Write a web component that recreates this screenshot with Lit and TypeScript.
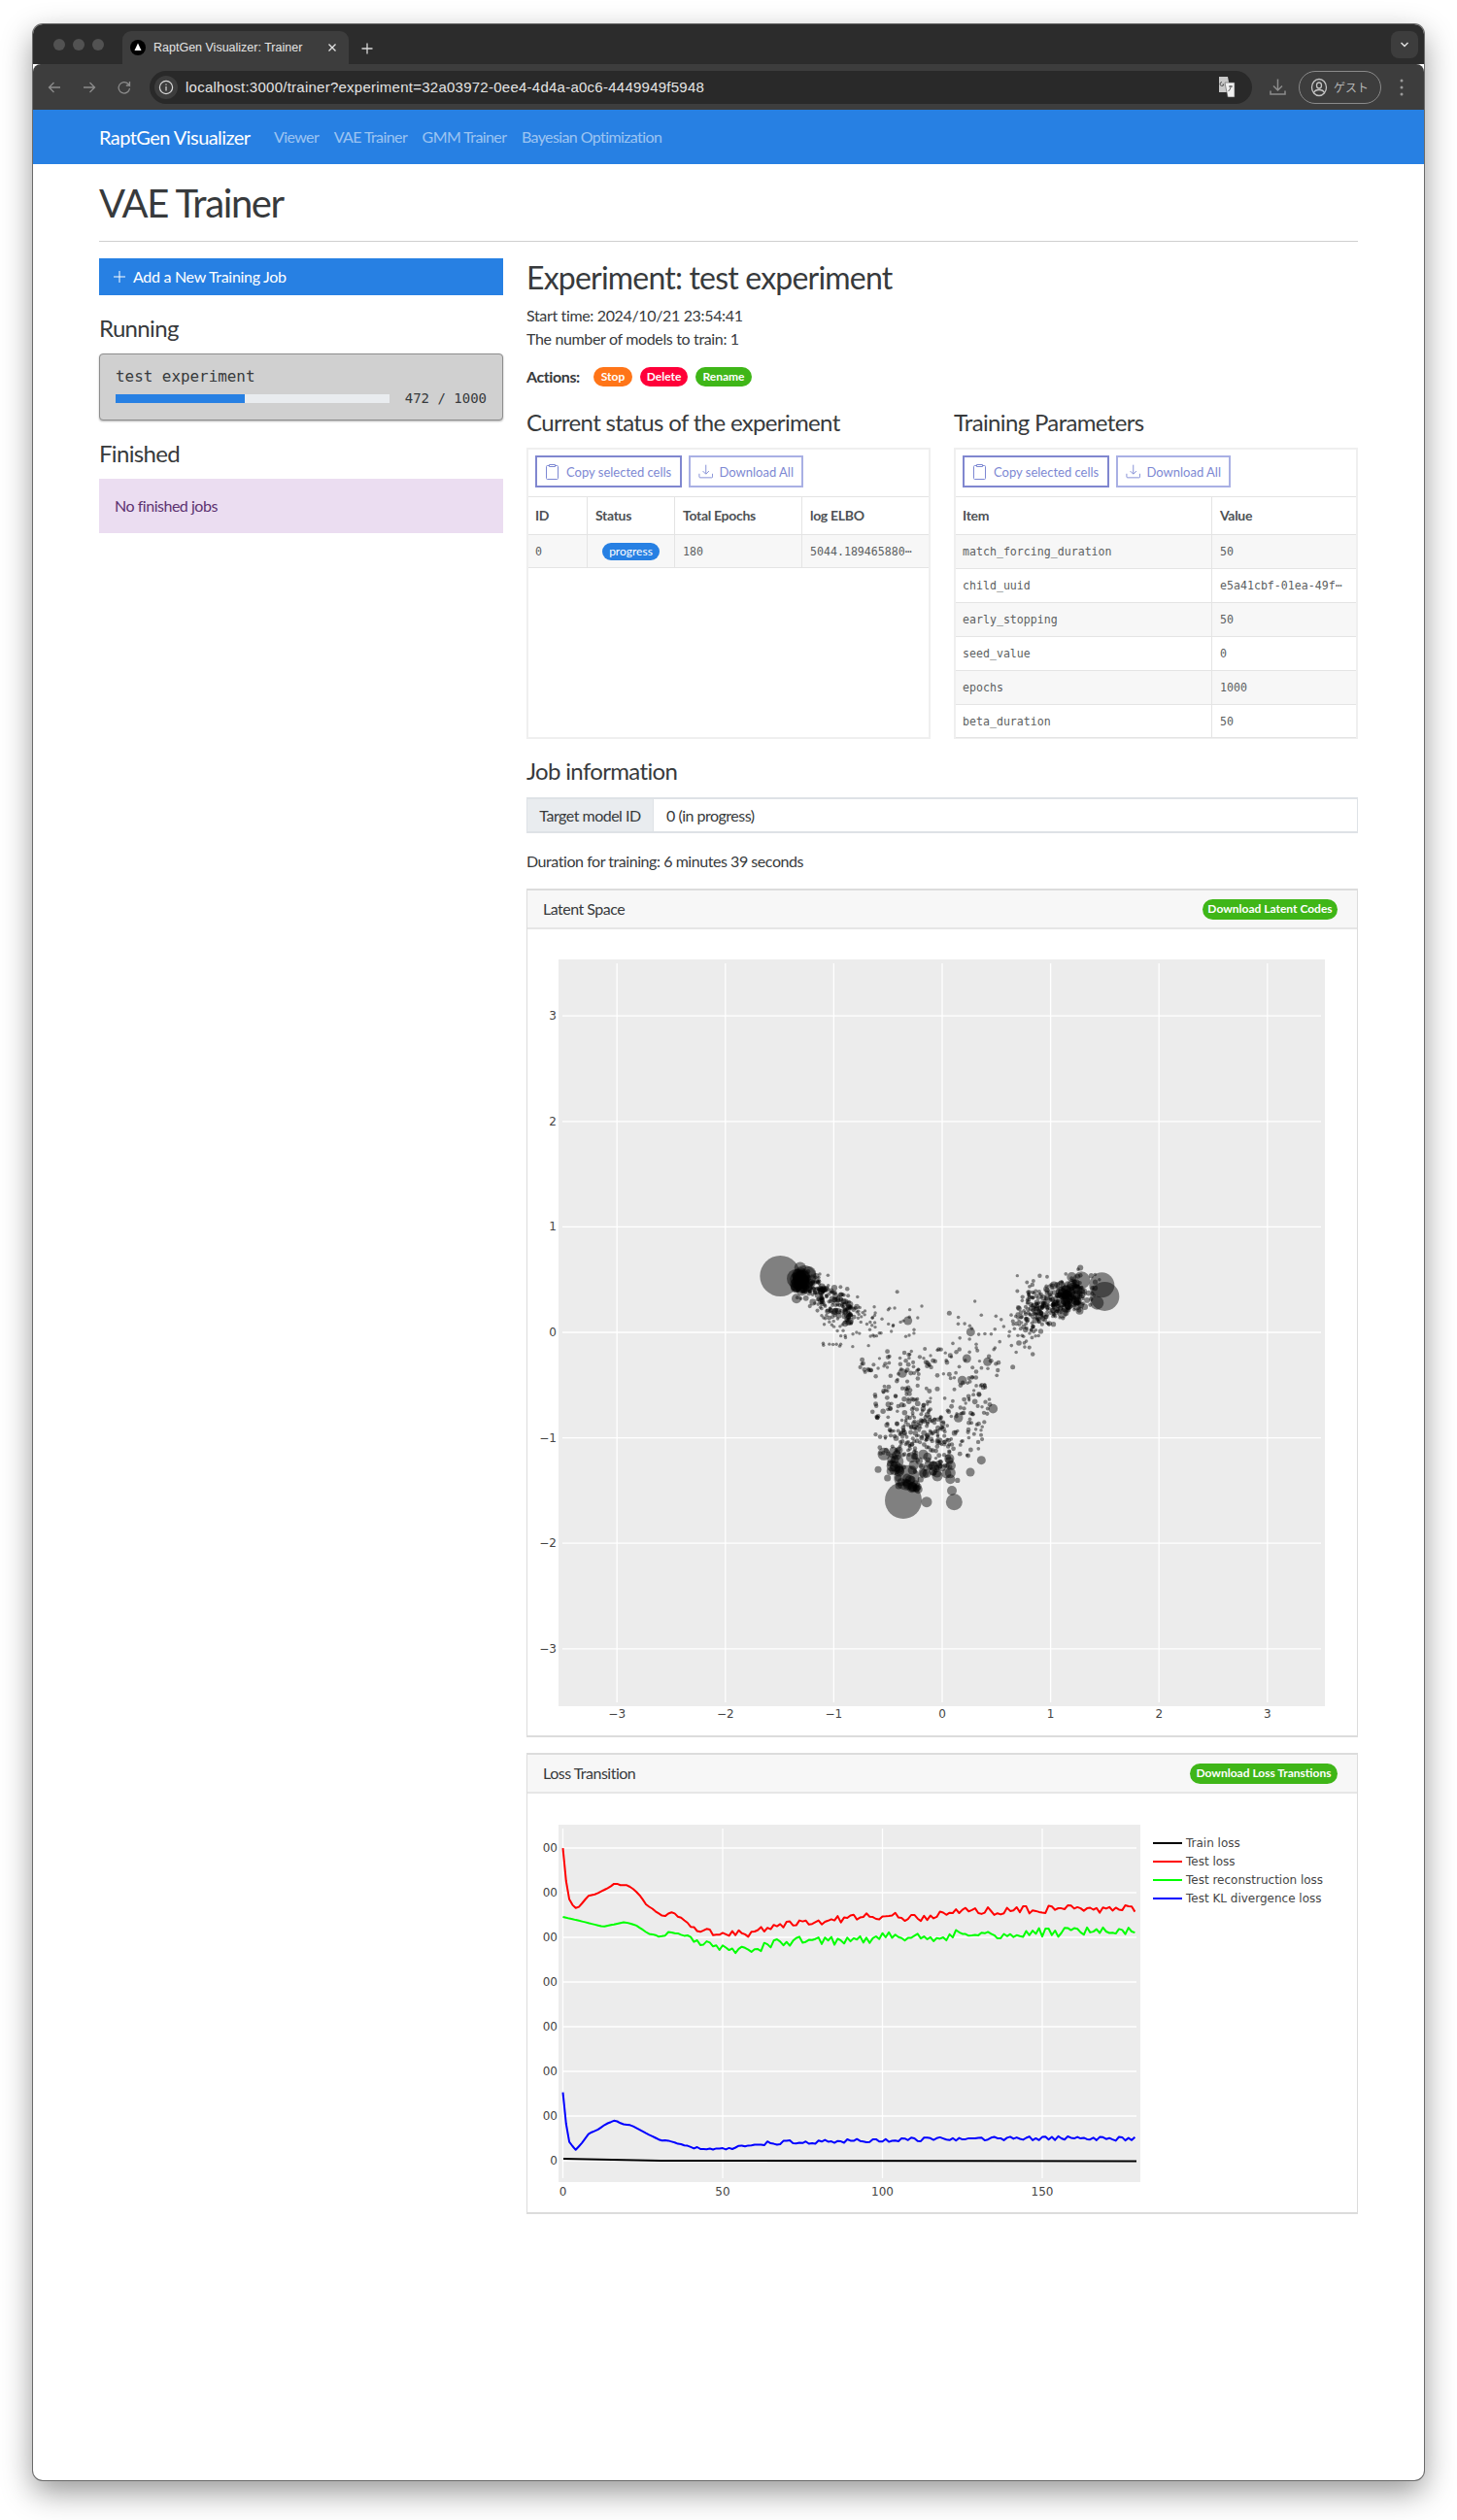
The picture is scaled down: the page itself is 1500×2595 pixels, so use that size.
import { css, html, LitElement, svg } from 'lit'
import { customElement } from 'lit/decorators.js'

/** Small seeded generator so the scatter looks the same on every load */
function seeded(seed: number) {
  let a = seed
  return () => {
    a = (a + 0x6d2b79f5) | 0
    let t = Math.imul(a ^ (a >>> 15), 1 | a)
    t = (t + Math.imul(t ^ (t >>> 7), 61 | t)) ^ t
    return ((t ^ (t >>> 14)) >>> 0) / 4294967296
  }
}

type Dot = [number, number, number]

function latentDots(): Dot[] {
  const rnd = seeded(1234)
  const gauss = () => (rnd() + rnd() + rnd() + rnd() - 2) * 1.73
  const dots: Dot[] = []
  // all positions below are picked from the reference crop at 3x, offset by 740,1260
  const add = (u: number, v: number, r: number) => dots.push([740 + u / 3, 1260 + v / 3, r])
  const size = (lo: number, hi: number) => lo + rnd() * rnd() * (hi - lo)

  for (let i = 0; i < 210; i++) {
    const t = rnd() ** 1.1
    const w = gauss() * 22
    add(255 + t * 165 + w * 0.6, 175 + t * 115 - w * 0.8, size(1.7, 4))
  }
  for (let i = 0; i < 30; i++) add(252 + gauss() * 13, 172 + gauss() * 13, 4 + rnd() * 4)
  for (let i = 0; i < 45; i++) add(310 + rnd() * 180, 250 + rnd() * 130, 1.7)
  for (let i = 0; i < 240; i++) {
    const a = gauss()
    add(1035 + a * 58, 245 - a * 28 + gauss() * 30, size(1.7, 3.4))
  }
  for (let i = 0; i < 50; i++) add(1085 + gauss() * 30, 230 + gauss() * 24, 2.5 + rnd() * 3)
  for (let i = 0; i < 60; i++) add(965 + gauss() * 24, 270 + gauss() * 50, 1.7 + rnd() * 0.6)
  for (let i = 0; i < 300; i++) {
    const v = 385 + rnd() * 335
    const half = 255 - (v - 385) * 0.25
    add(650 + (rnd() - 0.5) * half * 1.8, v, 1.6 + rnd() * 0.9)
  }
  for (let i = 0; i < 95; i++) add(625 + gauss() * 62, 630 + gauss() * 50, 1.7 + rnd() * 1.2)
  for (let i = 0; i < 42; i++) add(668 + gauss() * 30, 745 + gauss() * 20, 2.2 + rnd() * 3)
  for (let i = 0; i < 16; i++) add(596 + gauss() * 20, 808 + gauss() * 8, 3.5 + rnd() * 2.5)
  for (let i = 0; i < 12; i++) add(555 + gauss() * 10, 738 + gauss() * 20, 3 + rnd() * 3)
  for (let i = 0; i < 30; i++) add(430 + rnd() * 200, 255 + rnd() * 95, 1.7)
  for (let i = 0; i < 34; i++) add(720 + rnd() * 230, 280 + rnd() * 120, 1.8)

  const big: Dot[] = [
    [190, 162, 21], [265, 165, 12], [240, 170, 10], [240, 232, 5],
    [1183, 190, 13], [1192, 225, 15], [1120, 175, 9], [1090, 165, 5], [1168, 245, 7],
    [570, 855, 19], [727, 860, 8.5], [642, 860, 5.5], [510, 712, 6.5], [811, 731, 4.5],
    [777, 768, 4.5], [580, 785, 13], [595, 722, 5.5], [720, 825, 5], [492, 760, 3.5],
    [530, 765, 4], [521, 786, 3.5], [550, 735, 7], [557, 765, 5.5], [715, 770, 5.5],
    [715, 790, 5], [675, 780, 5.5], [597, 815, 5.5], [584, 300, 4.5], [778, 335, 4.5],
    [712, 277, 2.5], [766, 417, 4.5], [830, 427, 4.5], [752, 485, 4.8], [567, 462, 4.8],
    [847, 572, 4.8], [740, 600, 4.8], [927, 369, 2.8], [908, 443, 2.5], [680, 673, 4],
    [791, 550, 2.8], [551, 211, 2], [627, 255, 1.7], [791, 240, 1.7], [922, 161, 1.7],
  ]
  big.forEach(([u, v, r]) => add(u, v, r))
  return dots
}

type Key = [number, number]

function lossLine(keys: Key[], vBase: number, noise: number, seed: number): string {
  const rnd = seeded(seed)
  const pts: string[] = []
  const abs = keys.map(([u, v]): Key => [530 + u / 1.762, vBase + v / 3])
  for (let e = 0; e < 180; e++) {
    const x = 579.5 + e * 3.29
    let k = 0
    while (k < abs.length - 2 && abs[k + 1][0] < x) k++
    const [x0, y0] = abs[k]
    const [x1, y1] = abs[k + 1]
    const ramp = Math.min(1, Math.max(0, (e - 25) / 30))
    const y = y0 + ((y1 - y0) * (x - x0)) / (x1 - x0) + (rnd() - 0.5) * noise * ramp
    pts.push(`${x.toFixed(1)},${y.toFixed(1)}`)
  }
  return pts.join(' ')
}

const redLine = lossLine(
  [[87, 365], [92, 460], [98, 525], [108, 555], [115, 553], [122, 540], [133, 517], [148, 511], [160, 500], [172, 490], [182, 477], [192, 484], [205, 484], [218, 500], [228, 518], [238, 543], [252, 560], [267, 580], [273, 578], [280, 566], [295, 578], [312, 597], [325, 618], [340, 625], [355, 628], [365, 637], [385, 635], [400, 635], [422, 632], [450, 623], [465, 613], [490, 605], [510, 605], [530, 595], [570, 595], [590, 590], [640, 580], [680, 577], [720, 585], [760, 580], [800, 565], [850, 562], [880, 570], [910, 560], [1000, 557], [1128, 558]],
  1780, 8, 11,
)
const greenLine = lossLine(
  [[87, 582], [120, 595], [160, 612], [200, 598], [220, 608], [243, 634], [270, 645], [280, 630], [315, 645], [325, 660], [350, 667], [365, 675], [400, 682], [425, 685], [465, 668], [490, 660], [530, 657], [570, 655], [640, 648], [680, 643], [740, 650], [800, 635], [850, 632], [880, 642], [910, 632], [1000, 628], [1128, 630]],
  1780, 10, 22,
)
const blueLine = lossLine(
  [[87, 280], [92, 370], [98, 435], [110, 462], [122, 440], [135, 410], [150, 400], [165, 382], [182, 370], [195, 382], [210, 385], [225, 398], [240, 412], [265, 432], [280, 432], [300, 445], [325, 455], [360, 457], [385, 462], [410, 450], [430, 443], [500, 438], [600, 435], [640, 432], [700, 431], [760, 427], [850, 427], [1000, 425], [1128, 428]],
  2060, 4, 33,
)

const clipboardIcon = html`<svg width="16" height="18" viewBox="0 0 16 18" fill="none" stroke="currentColor" stroke-width="1">
  <path d="M4.500 2.500H2.500a1 1 0 0 0-1 1v12a1 1 0 0 0 1 1h10a1 1 0 0 0 1-1v-12a1 1 0 0 0-1-1H10.500" />
  <path d="M4.500 1.500h6v2h-6z" />
</svg>`

const downloadIcon = html`<svg width="16" height="17" viewBox="0 0 17 17" fill="none" stroke="currentColor" stroke-width="1">
  <path d="M8.500 1v10M5 8l3.500 3.500L12 8" />
  <path d="M1 11v3.500a1 1 0 0 0 1 1h13a1 1 0 0 0 1-1V11" />
</svg>`

@customElement('app-root')
export class AppRoot extends LitElement {
  static styles = css`
    :host {
      --sans: Lato, 'Noto Sans', sans-serif;
      --mono: 'DejaVu Sans Mono', monospace;
      display: block;
      width: 1500px;
      height: 2595px;
      padding: 25px 34px 0;
      box-sizing: border-box;
      background: #fff;
      font-family: var(--sans);
      font-size: 16px;
      line-height: 24px;
      color: #373a3c;
    }
    * {
      box-sizing: border-box;
    }
    .window {
      height: 2529px;
      border-radius: 10px;
      overflow: hidden;
      background: #fff;
      box-shadow: 0 0 0 1px #6a6a6a, 0 12px 32px rgb(0 0 0 / 0.42);
    }

    /* browser chrome */
    .tabstrip {
      display: flex;
      align-items: flex-end;
      height: 41px;
      padding-left: 21px;
      background: #2c2c2c;
    }
    .lights {
      display: flex;
      gap: 8px;
      width: 71px;
      padding-bottom: 14px;
    }
    .lights i {
      width: 12px;
      height: 12px;
      border-radius: 50%;
      background: #525252;
    }
    .tab {
      display: flex;
      align-items: center;
      width: 233px;
      height: 34px;
      padding: 0 12px 0 8px;
      border-radius: 9px 9px 0 0;
      background: #3d3d3d;
      font-family: 'Liberation Sans', sans-serif;
      font-size: 12.500px;
      color: #e4e4e4;
    }
    .tab span {
      flex: 1;
      margin-left: 8px;
    }
    .new-tab {
      margin: 0 0 8px 11px;
      height: 16px;
    }
    .tab-menu {
      display: flex;
      align-items: center;
      justify-content: center;
      width: 28px;
      height: 28px;
      margin: 0 6px 6px auto;
      border-radius: 8px;
      background: #3d3d3d;
    }
    .toolbar {
      display: flex;
      align-items: center;
      height: 47px;
      background: #3d3d3d;
      border-radius: 8px 8px 0 0;
    }
    .nav-icons {
      display: flex;
      align-items: center;
      gap: 20px;
      width: 120px;
      padding-left: 14px;
    }
    .omnibox {
      display: flex;
      align-items: center;
      width: 1135px;
      height: 34px;
      padding: 0 17px 0 5px;
      border-radius: 17px;
      background: #292929;
      font-family: 'Liberation Sans', sans-serif;
      font-size: 15px;
      letter-spacing: 0.25px;
      color: #e4e4e4;
    }
    .omnibox .info {
      display: flex;
      align-items: center;
      justify-content: center;
      width: 24px;
      height: 24px;
      margin-right: 8px;
      border-radius: 50%;
      background: #3d3d3d;
    }
    .omnibox .url {
      flex: 1;
    }
    .download-icon {
      margin-left: 18px;
    }
    .guest {
      display: flex;
      align-items: center;
      gap: 6px;
      width: 85px;
      height: 34px;
      margin-left: 13px;
      padding-left: 11px;
      border: 1px solid #8a8a8a;
      border-radius: 17px;
      font-family: 'Noto Sans CJK JP', sans-serif;
      font-size: 12px;
      color: #b4b4b4;
    }
    .kebab {
      margin-left: 19px;
    }

    /* site */
    .navbar {
      display: flex;
      align-items: center;
      height: 56px;
      padding-left: 68px;
      background: #2780e3;
      color: rgb(255 255 255 / 0.55);
      white-space: nowrap;
    }
    .brand {
      width: 180px;
      font-size: 20px;
      color: #fff;
      letter-spacing: -0.55px;
    }
    .navbar a {
      margin-right: 15.500px;
      letter-spacing: -0.6px;
    }
    main {
      padding: 0 68px;
    }
    h1 {
      margin: 0;
      height: 80px;
      padding-top: 15px;
      border-bottom: 1px solid #cfcfcf;
      font-size: 40px;
      line-height: 50px;
      font-weight: 400;
      letter-spacing: -1.4px;
    }
    .columns {
      display: grid;
      grid-template-columns: 416px 856px;
      gap: 24px;
      margin-top: 17px;
    }
    h2,
    h3 {
      margin: 0;
      font-weight: 400;
    }
    h2 {
      height: 42px;
      font-size: 32px;
      line-height: 40px;
      letter-spacing: -0.8px;
    }
    h3 {
      height: 30px;
      font-size: 24px;
      line-height: 28px;
      letter-spacing: -0.66px;
    }
    .add-job {
      display: flex;
      align-items: center;
      gap: 7px;
      height: 38px;
      padding-left: 14px;
      background: #2780e3;
      color: #fff;
      letter-spacing: -0.3px;
    }
    .side-title {
      margin: 20px 0 10px;
    }
    .job {
      height: 69px;
      padding: 11px 16px 0;
      border: 1px solid #8d8d8d;
      border-radius: 4px;
      background: #d0d0d0;
      box-shadow: 0 1px 2px rgb(0 0 0 / 0.3);
      font-family: var(--mono);
      font-size: 15.900px;
    }
    .job-progress {
      display: flex;
      align-items: center;
      gap: 16px;
      height: 20px;
      font-size: 14px;
    }
    .bar {
      flex: 1;
      height: 9px;
      background: #e9ecef;
    }
    .bar div {
      width: 47.2%;
      height: 100%;
      background: #2780e3;
    }
    .alert {
      height: 56px;
      padding: 16px;
      background: #ebddf1;
      color: #5c3270;
      letter-spacing: -0.48px;
    }
    .meta {
      margin: 5px 0 0;
      letter-spacing: -0.35px;
    }
    .actions {
      display: flex;
      align-items: center;
      gap: 8px;
      height: 20px;
      margin-top: 17px;
    }
    .actions b {
      width: 61px;
      letter-spacing: -0.4px;
    }
    .badge {
      display: inline-flex;
      align-items: center;
      justify-content: center;
      border-radius: 11px;
      font-size: 12px;
      font-weight: 700;
      line-height: 1;
      color: #fff;
    }
    .actions .badge {
      height: 20px;
    }
    .stop {
      width: 40px;
      background: #ff7518;
    }
    .delete {
      width: 49px;
      background: #ff0039;
    }
    .rename {
      width: 58px;
      background: #3fb618;
    }
    .grids {
      display: grid;
      grid-template-columns: 416px 416px;
      gap: 24px;
      margin-top: 23px;
    }
    .grid-box {
      height: 300px;
      margin-top: 10px;
      border: 2px solid #efefef;
      font-size: 14px;
    }
    .grid-tools {
      display: flex;
      gap: 7px;
      height: 48px;
      padding: 6px 7px;
    }
    .grid-tools button {
      display: flex;
      align-items: center;
      gap: 6px;
      height: 33px;
      padding: 0 8px;
      border: 2px solid #a9b0e4;
      background: #fff;
      font: inherit;
      font-size: 13px;
      white-space: nowrap;
      color: #7d88d3;
    }
    .grid-tools button:first-child {
      width: 151px;
      border-color: #8087cf;
    }
    .grid-tools button:last-child {
      width: 118px;
    }
    .row {
      display: grid;
      height: 35px;
      border-top: 1px solid #e4e4e4;
      font-family: var(--mono);
      font-size: 11.600px;
      color: #5c5f61;
    }
    .row.head {
      height: 39px;
      font-family: var(--sans);
      font-size: 14px;
      font-weight: 700;
      letter-spacing: -0.3px;
      color: #4e5255;
    }
    .row.odd {
      background: #f7f7f7;
    }
    .row.last {
      border-bottom: 1px solid #e4e4e4;
    }
    .status-cols {
      grid-template-columns: 60px 90px 131px 1fr;
    }
    .param-cols {
      grid-template-columns: 263px 1fr;
    }
    .cell {
      display: flex;
      align-items: center;
      padding: 0 8px;
      border-left: 1px solid #e4e4e4;
      overflow: hidden;
      white-space: nowrap;
    }
    .cell:first-child {
      border-left: 0;
      padding-left: 7px;
    }
    .cell.center {
      justify-content: center;
    }
    .progress-pill {
      width: 59px;
      height: 18px;
      flex: none;
      background: #2780e3;
      font-family: var(--sans);
      font-weight: 400;
    }
    .job-title {
      margin-top: 19px;
    }
    .input-group {
      display: flex;
      height: 37px;
      margin-top: 11px;
      border: 1px solid #dee2e6;
      border-width: 2px 1px;
      letter-spacing: -0.5px;
    }
    .input-group label {
      display: flex;
      align-items: center;
      justify-content: center;
      width: 130px;
      background: #e9ecef;
      border-right: 1px solid #dee2e6;
    }
    .input-group div {
      display: flex;
      align-items: center;
      padding-left: 13px;
    }
    .duration {
      margin: 17px 0 16px;
      letter-spacing: -0.45px;
    }
    .card {
      border: 1px solid #dcdcdc;
      border-top-width: 2px;
      border-bottom-width: 2px;
    }
    .card + .card {
      margin-top: 16px;
    }
    .card-head {
      display: flex;
      align-items: center;
      justify-content: space-between;
      height: 40px;
      padding: 0 20px 0 16px;
      background: #f7f7f7;
      border-bottom: 2px solid #e6e6e6;
      letter-spacing: -0.5px;
    }
    .card-head .badge {
      height: 21px;
      letter-spacing: 0;
      background: #3fb618;
    }
    .latent-btn {
      width: 139px;
    }
    .loss-btn {
      width: 152px;
    }
    .card svg {
      display: block;
    }
    .latent-card {
      height: 874px;
    }
    .loss-card {
      height: 475px;
    }
    .plot-bg {
      fill: #ececec;
    }
    .grid-line {
      stroke: #fff;
      stroke-width: 1.300;
    }
    .tick {
      font-family: 'DejaVu Sans', sans-serif;
      font-size: 12px;
      fill: #444;
    }
    .trace {
      fill: none;
      stroke-width: 2;
      stroke-linejoin: round;
    }
  `

  private latent = latentDots()

  private renderGrid(title: string, cols: string, heads: string[], rows: string[][]) {
    return html`<section>
      <h3>${title}</h3>
      <div class="grid-box">
        <div class="grid-tools">
          <button>${clipboardIcon}Copy selected cells</button>
          <button>${downloadIcon}Download All</button>
        </div>
        <div class="row head ${cols}">${heads.map((h) => html`<div class="cell">${h}</div>`)}</div>
        ${rows.map(
          (r, i) => html`<div class="row ${cols} ${i % 2 ? '' : 'odd'} ${i === rows.length - 1 ? 'last' : ''}">
            ${r.map((c) =>
              c === 'progress'
                ? html`<div class="cell center"><span class="badge progress-pill">progress</span></div>`
                : html`<div class="cell">${c}</div>`,
            )}
          </div>`,
        )}
      </div>
    </section>`
  }

  private renderLatent() {
    const xs = [-3, -2, -1, 0, 1, 2, 3]
    return html`<svg width="854" height="830" viewBox="543 957 854 830">
      <rect class="plot-bg" x="575" y="988" width="789" height="769"></rect>
      ${xs.map((v) => {
        const x = 970 + v * 111.6
        const y = 1372 - v * 108.6
        return svg`
          <line class="grid-line" x1=${x} x2=${x} y1="992" y2="1753"></line>
          <line class="grid-line" x1="579" x2="1360" y1=${y} y2=${y}></line>
          <text class="tick" x=${x} y="1769" text-anchor="middle">${v < 0 ? `\u2212${-v}` : v}</text>
          <text class="tick" x="573" y=${y + 4} text-anchor="end">${v < 0 ? `\u2212${-v}` : v}</text>`
      })}
      ${this.latent.map(([x, y, r]) => svg`<circle cx=${x} cy=${y} r=${r} fill="#000" fill-opacity="0.46"></circle>`)}
    </svg>`
  }

  private renderLoss() {
    const xs = [0, 50, 100, 150]
    const ys = [1903, 1949, 1995, 2041, 2087, 2133, 2179]
    const legend: [string, string][] = [
      ['Train loss', '#000'],
      ['Test loss', '#f00'],
      ['Test reconstruction loss', '#0f0'],
      ['Test KL divergence loss', '#00f'],
    ]
    return html`<svg width="854" height="431" viewBox="543 1847 854 431">
      <rect class="plot-bg" x="575" y="1879" width="599" height="368"></rect>
      ${xs.map((v) => {
        const x = 579.5 + v * 3.29
        return svg`
          <line class="grid-line" x1=${x} x2=${x} y1="1883" y2="2243"></line>
          <text class="tick" x=${x} y="2261" text-anchor="middle">${v}</text>`
      })}
      ${ys.map(
        (y) => svg`
          <line class="grid-line" x1="580" x2="1170" y1=${y} y2=${y}></line>
          <text class="tick" x="574" y=${y + 4} text-anchor="end">00</text>`,
      )}
      <line class="grid-line" x1="580" x2="1170" y1="2225" y2="2225"></line>
      <text class="tick" x="574" y="2229" text-anchor="end">0</text>
      <polyline class="trace" stroke="#000" points="580,2223 680,2225 1170,2225.5"></polyline>
      <polyline class="trace" stroke="#f00" points=${redLine}></polyline>
      <polyline class="trace" stroke="#0f0" points=${greenLine}></polyline>
      <polyline class="trace" stroke="#00f" points=${blueLine}></polyline>
      ${legend.map(([name, color], i) => {
        const y = 1898 + i * 19
        return svg`
          <line x1="1187" x2="1217" y1=${y} y2=${y} stroke=${color} stroke-width="2"></line>
          <text class="tick" x="1221" y=${y + 4}>${name}</text>`
      })}
    </svg>`
  }

  render() {
    return html`<div class="window">
      <div class="tabstrip">
        <div class="lights"><i></i><i></i><i></i></div>
        <div class="tab">
          <svg width="16" height="16" viewBox="0 0 16 16">
            <circle cx="8" cy="8" r="8" fill="#000"></circle>
            <path d="M8 3.500l3.500 7.500h-7z" fill="#fff"></path>
          </svg>
          <span>RaptGen Visualizer: Trainer</span>
          <svg width="10" height="10" viewBox="0 0 10 10" stroke="#e4e4e4" stroke-width="1.300">
            <path d="M1.500 1.500l7 7M8.500 1.500l-7 7"></path>
          </svg>
        </div>
        <svg class="new-tab" width="16" height="16" viewBox="0 0 16 16" stroke="#d8d8d8" stroke-width="1.300">
          <path d="M8 2.500v11M2.500 8h11"></path>
        </svg>
        <div class="tab-menu">
          <svg width="10" height="8" viewBox="0 0 10 8" fill="none" stroke="#e4e4e4" stroke-width="1.400">
            <path d="M1.500 2l3.500 3.500L8.500 2"></path>
          </svg>
        </div>
      </div>
      <div class="toolbar">
        <div class="nav-icons">
          <svg width="16" height="16" viewBox="0 0 16 16" fill="none" stroke="#8c8c8c" stroke-width="1.300">
            <path d="M14 8H2.500M7.500 3L2.500 8l5 5"></path>
          </svg>
          <svg width="16" height="16" viewBox="0 0 16 16" fill="none" stroke="#8c8c8c" stroke-width="1.300">
            <path d="M2 8h11.500M8.500 3l5 5-5 5"></path>
          </svg>
          <svg width="16" height="16" viewBox="0 0 16 16" fill="none" stroke="#8c8c8c" stroke-width="1.300">
            <path d="M13.500 9a5.700 5.700 0 1 1-1.600-4.700L13.500 6V2M13.500 6H9.800"></path>
          </svg>
        </div>
        <div class="omnibox">
          <span class="info">
            <svg width="16" height="16" viewBox="0 0 16 16" fill="none" stroke="#d8d8d8" stroke-width="1.200">
              <circle cx="8" cy="8" r="6.600"></circle>
              <path d="M8 7v4.500M8 4.400v1.300"></path>
            </svg>
          </span>
          <span class="url">localhost:3000/trainer?experiment=32a03972-0ee4-4d4a-a0c6-4449949f5948</span>
          <svg width="17" height="23" viewBox="0 0 17 23">
            <path d="M0 1h9l3 16H0z" fill="#c8c8c8"></path>
            <path d="M6 7h10v15H9z" fill="#f0f0f0" stroke="#555" stroke-width="0.600"></path>
            <path d="M3 6.500a2 2 0 1 0 2 2.500H3.600M10 11h4M12 10v1c0 2.500-1.500 4-2.500 5" fill="none" stroke="#444" stroke-width="0.900"></path>
          </svg>
        </div>
        <svg class="download-icon" width="17" height="17" viewBox="0 0 17 17" fill="none" stroke="#8c8c8c" stroke-width="1.500">
          <path d="M8.500 0.500v11M4 7.500l4.500 4.500L13 7.500M1 12.500v3.500h15v-3.500"></path>
        </svg>
        <div class="guest">
          <svg width="18" height="20" viewBox="0 0 18 20" fill="none" stroke="#c4c4c4" stroke-width="1.300">
            <ellipse cx="9" cy="10" rx="7.500" ry="8.500"></ellipse>
            <ellipse cx="9" cy="8" rx="2.500" ry="3"></ellipse>
            <path d="M3.500 15.500c1-2.500 3-3 5.500-3s4.500.5 5.500 3"></path>
          </svg>
          ゲスト
        </div>
        <svg class="kebab" width="4" height="20" viewBox="0 0 4 20" fill="#9a9a9a">
          <circle cx="2" cy="3" r="1.500"></circle>
          <circle cx="2" cy="10" r="1.500"></circle>
          <circle cx="2" cy="17" r="1.500"></circle>
        </svg>
      </div>

      <nav class="navbar">
        <span class="brand">RaptGen Visualizer</span>
        <a>Viewer</a><a>VAE Trainer</a><a>GMM Trainer</a><a>Bayesian Optimization</a>
      </nav>

      <main>
        <h1>VAE Trainer</h1>
        <div class="columns">
          <aside>
            <div class="add-job">
              <svg width="14" height="14" viewBox="0 0 14 14" stroke="#fff" stroke-width="1">
                <path d="M7 1v12M1 7h12"></path>
              </svg>
              Add a New Training Job
            </div>
            <h3 class="side-title">Running</h3>
            <div class="job">
              <div>test experiment</div>
              <div class="job-progress">
                <div class="bar"><div></div></div>
                <span>472 / 1000</span>
              </div>
            </div>
            <h3 class="side-title">Finished</h3>
            <div class="alert">No finished jobs</div>
          </aside>

          <section>
            <h2>Experiment: test experiment</h2>
            <p class="meta">Start time: 2024/10/21 23:54:41<br />The number of models to train: 1</p>
            <div class="actions">
              <b>Actions:</b>
              <span class="badge stop">Stop</span>
              <span class="badge delete">Delete</span>
              <span class="badge rename">Rename</span>
            </div>

            <div class="grids">
              ${this.renderGrid(
                'Current status of the experiment',
                'status-cols',
                ['ID', 'Status', 'Total Epochs', 'log ELBO'],
                [['0', 'progress', '180', '5044.189465880⋯']],
              )}
              ${this.renderGrid('Training Parameters', 'param-cols', ['Item', 'Value'], [
                ['match_forcing_duration', '50'],
                ['child_uuid', 'e5a41cbf-01ea-49f⋯'],
                ['early_stopping', '50'],
                ['seed_value', '0'],
                ['epochs', '1000'],
                ['beta_duration', '50'],
              ])}
            </div>

            <h3 class="job-title">Job information</h3>
            <div class="input-group">
              <label>Target model ID</label>
              <div>0 (in progress)</div>
            </div>
            <p class="duration">Duration for training: 6 minutes 39 seconds</p>

            <div class="card latent-card">
              <div class="card-head">
                Latent Space
                <span class="badge latent-btn">Download Latent Codes</span>
              </div>
              ${this.renderLatent()}
            </div>
            <div class="card loss-card">
              <div class="card-head">
                Loss Transition
                <span class="badge loss-btn">Download Loss Transtions</span>
              </div>
              ${this.renderLoss()}
            </div>
          </section>
        </div>
      </main>
    </div>`
  }
}

declare global {
  interface HTMLElementTagNameMap {
    'app-root': AppRoot
  }
}
